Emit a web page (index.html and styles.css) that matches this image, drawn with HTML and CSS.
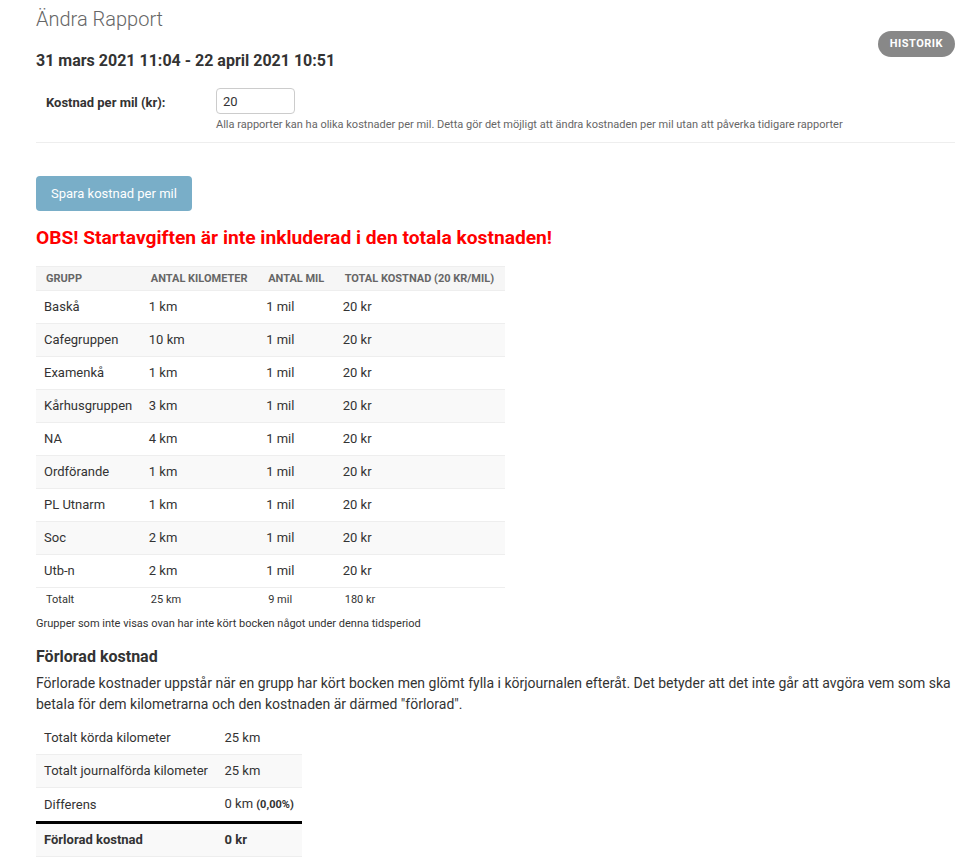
FILE: index.html
```html
<!DOCTYPE html>
<html lang="sv">
<head>
<meta charset="utf-8">
<title>Ändra Rapport</title>
<link rel="stylesheet" href="styles.css">
</head>
<body>
<div class="content">
  <div class="page-head">
    <div class="titles">
      <h1 class="title">Ändra Rapport</h1>
      <h2 class="period">31 mars 2021 11:04 - 22 april 2021 10:51</h2>
    </div>
    <a class="history" href="#">Historik</a>
  </div>

  <form class="cost-form">
    <div class="form-row">
      <label class="form-label" for="cost">Kostnad per mil (kr):</label>
      <div class="form-field">
        <input class="text-input" id="cost" type="text" value="20">
        <div class="help">Alla rapporter kan ha olika kostnader per mil. Detta gör det möjligt att ändra kostnaden per mil utan att påverka tidigare rapporter</div>
      </div>
    </div>
    <button class="save-btn" type="button">Spara kostnad per mil</button>
  </form>

  <h2 class="warning">OBS! Startavgiften är inte inkluderad i den totala kostnaden!</h2>

  <table class="groups">
    <thead>
      <tr><th>Grupp</th><th>Antal kilometer</th><th>Antal mil</th><th>Total kostnad (20 kr/mil)</th></tr>
    </thead>
    <tbody>
      <tr><td>Baskå</td><td>1 km</td><td>1 mil</td><td>20 kr</td></tr>
      <tr><td>Cafegruppen</td><td>10 km</td><td>1 mil</td><td>20 kr</td></tr>
      <tr><td>Examenkå</td><td>1 km</td><td>1 mil</td><td>20 kr</td></tr>
      <tr><td>Kårhusgruppen</td><td>3 km</td><td>1 mil</td><td>20 kr</td></tr>
      <tr><td>NA</td><td>4 km</td><td>1 mil</td><td>20 kr</td></tr>
      <tr><td>Ordförande</td><td>1 km</td><td>1 mil</td><td>20 kr</td></tr>
      <tr><td>PL Utnarm</td><td>1 km</td><td>1 mil</td><td>20 kr</td></tr>
      <tr><td>Soc</td><td>2 km</td><td>1 mil</td><td>20 kr</td></tr>
      <tr><td>Utb-n</td><td>2 km</td><td>1 mil</td><td>20 kr</td></tr>
    </tbody>
    <tfoot>
      <tr><td>Totalt</td><td>25 km</td><td>9 mil</td><td>180 kr</td></tr>
    </tfoot>
  </table>
  <p class="note">Grupper som inte visas ovan har inte kört bocken något under denna tidsperiod</p>

  <h3 class="section-title">Förlorad kostnad</h3>
  <p class="section-text">Förlorade kostnader uppstår när en grupp har kört bocken men glömt fylla i körjournalen efteråt. Det betyder att det inte går att avgöra vem som ska betala för dem kilometrarna och den kostnaden är därmed "förlorad".</p>

  <table class="lost">
    <tbody>
      <tr><td>Totalt körda kilometer</td><td>25 km</td></tr>
      <tr><td>Totalt journalförda kilometer</td><td>25 km</td></tr>
      <tr><td>Differens</td><td>0 km <strong class="pct">(0,00%)</strong></td></tr>
      <tr class="sum"><td>Förlorad kostnad</td><td>0 kr</td></tr>
    </tbody>
  </table>
</div>
</body>
</html>
```

FILE: styles.css
```css
* { box-sizing: border-box; }

html, body {
  margin: 0;
  padding: 0;
  background: #fff;
}

body {
  font-family: Roboto, "Liberation Sans", Arial, sans-serif;
  font-size: 14px;
  color: #333;
}

.content {
  padding: 7px 22px 20px 36px;
}

.page-head {
  display: flex;
  justify-content: space-between;
  align-items: flex-start;
}

.title {
  margin: 0;
  font-size: 20px;
  line-height: 24px;
  font-weight: 300;
  color: #666;
}

.period {
  margin: 20px 0 0;
  font-size: 16px;
  line-height: 20px;
  font-weight: 700;
  color: #333;
}

.history {
  margin-top: 24px;
  display: block;
  height: 26px;
  line-height: 26px;
  padding: 0 12px;
  border-radius: 13px;
  background: #888;
  color: #fff;
  font-size: 11px;
  font-weight: 700;
  letter-spacing: 0.5px;
  text-transform: uppercase;
  text-decoration: none;
}

.cost-form {
  margin: 0;
}

.form-row {
  display: flex;
  margin-top: 7px;
  padding: 10px;
  border-bottom: 1px solid #eee;
}

.form-label {
  width: 170px;
  flex: none;
  padding-top: 7px;
  font-size: 13px;
  line-height: 16px;
  font-weight: 700;
  color: #333;
}

.text-input {
  display: block;
  width: 79px;
  height: 26px;
  padding: 4px 6px;
  border: 1px solid #ccc;
  border-radius: 4px;
  font-family: inherit;
  font-size: 13px;
  color: #333;
  background: #fff;
}

.help {
  margin-top: 4px;
  font-size: 11px;
  line-height: 14px;
  color: #666;
}

.save-btn {
  display: block;
  margin-top: 33px;
  height: 35px;
  padding: 0 15px;
  border: none;
  border-radius: 4px;
  background: #79aec8;
  color: #fff;
  font-family: inherit;
  font-size: 13px;
}

.warning {
  margin: 15px 0 0;
  font-size: 19.2px;
  line-height: 24px;
  font-weight: 700;
  color: #f00;
}

.groups {
  margin-top: 16px;
  border-collapse: collapse;
  width: 469px;
}

.groups th {
  text-align: left;
  padding: 5px 10px;
  font-size: 11px;
  line-height: 13px;
  font-weight: 700;
  text-transform: uppercase;
  color: #666;
  background: #f6f6f6;
  border-top: 1px solid #eee;
  border-bottom: 1px solid #eee;
  white-space: nowrap;
}

.groups tbody td,
.lost td {
  padding: 8px;
  font-size: 13px;
  line-height: 16px;
  border-bottom: 1px solid #eee;
  color: #333;
  white-space: nowrap;
}

.groups tbody tr:nth-child(even),
.lost tr:nth-child(even) {
  background: #f9f9f9;
}

.groups tfoot td {
  padding: 5px 10px;
  font-size: 11px;
  line-height: 14px;
  color: #333;
}

.note {
  margin: 5px 0 0;
  font-size: 11px;
  line-height: 14px;
  color: #333;
}

.section-title {
  margin: 16px 0 0;
  font-size: 16px;
  line-height: 20px;
  font-weight: 700;
  color: #333;
}

.section-text {
  margin: 6px 0 0;
  font-size: 14px;
  line-height: 21px;
  color: #333;
}

.lost {
  margin-top: 7px;
  border-collapse: collapse;
  width: 266px;
}

.lost .pct {
  font-size: 11px;
}

.lost tr.sum td {
  border-top: 3px solid #000;
  font-weight: 700;
}
```
